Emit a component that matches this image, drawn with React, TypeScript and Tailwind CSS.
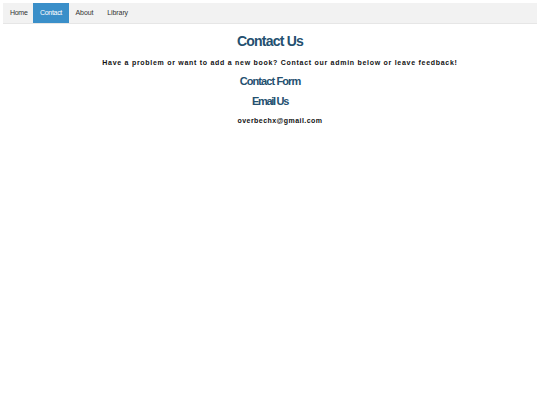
export default function App() {
  return (
    <div className="min-h-[405px] bg-white px-[3px] pt-[3px]" style={{ fontFamily: '"Liberation Sans", Arial, sans-serif' }}>
      <nav className="flex h-[21px] bg-[#f2f2f2] border-b border-[#e6e6e6] text-[7px] text-[#333]">
        <a className="flex items-center pl-[7px] pr-[6px] tracking-[-0.3px]">Home</a>
        <a className="flex items-center px-[6.5px] bg-[#3a8fc9] text-white tracking-[-0.3px]">Contact</a>
        <a className="flex items-center px-[7px] tracking-[-0.1px]">About</a>
        <a className="flex items-center px-[7px] tracking-[-0.1px]">Library</a>
      </nav>
      <div className="flex flex-col items-center text-center">
        <h1 className="mt-[8px] text-[14px] leading-[18px] font-bold text-[#24506f] tracking-[-0.8px]">Contact Us</h1>
        <p className="mt-[8px] pl-[20px] text-[7px] leading-[10px] font-bold text-[#111] tracking-[0.72px]">
          Have a problem or want to add a new book? Contact our admin below or leave feedback!
        </p>
        <h2 className="mt-[6px] text-[11px] leading-[14px] font-bold text-[#24506f] tracking-[-0.9px]">Contact Form</h2>
        <h2 className="mt-[6px] text-[11px] leading-[14px] font-bold text-[#24506f] tracking-[-1.3px]">Email Us</h2>
        <p className="mt-[8px] pl-[20px] text-[7px] leading-[10px] font-bold text-[#111] tracking-[0.45px]">overbechx@gmail.com</p>
      </div>
    </div>
  );
}
